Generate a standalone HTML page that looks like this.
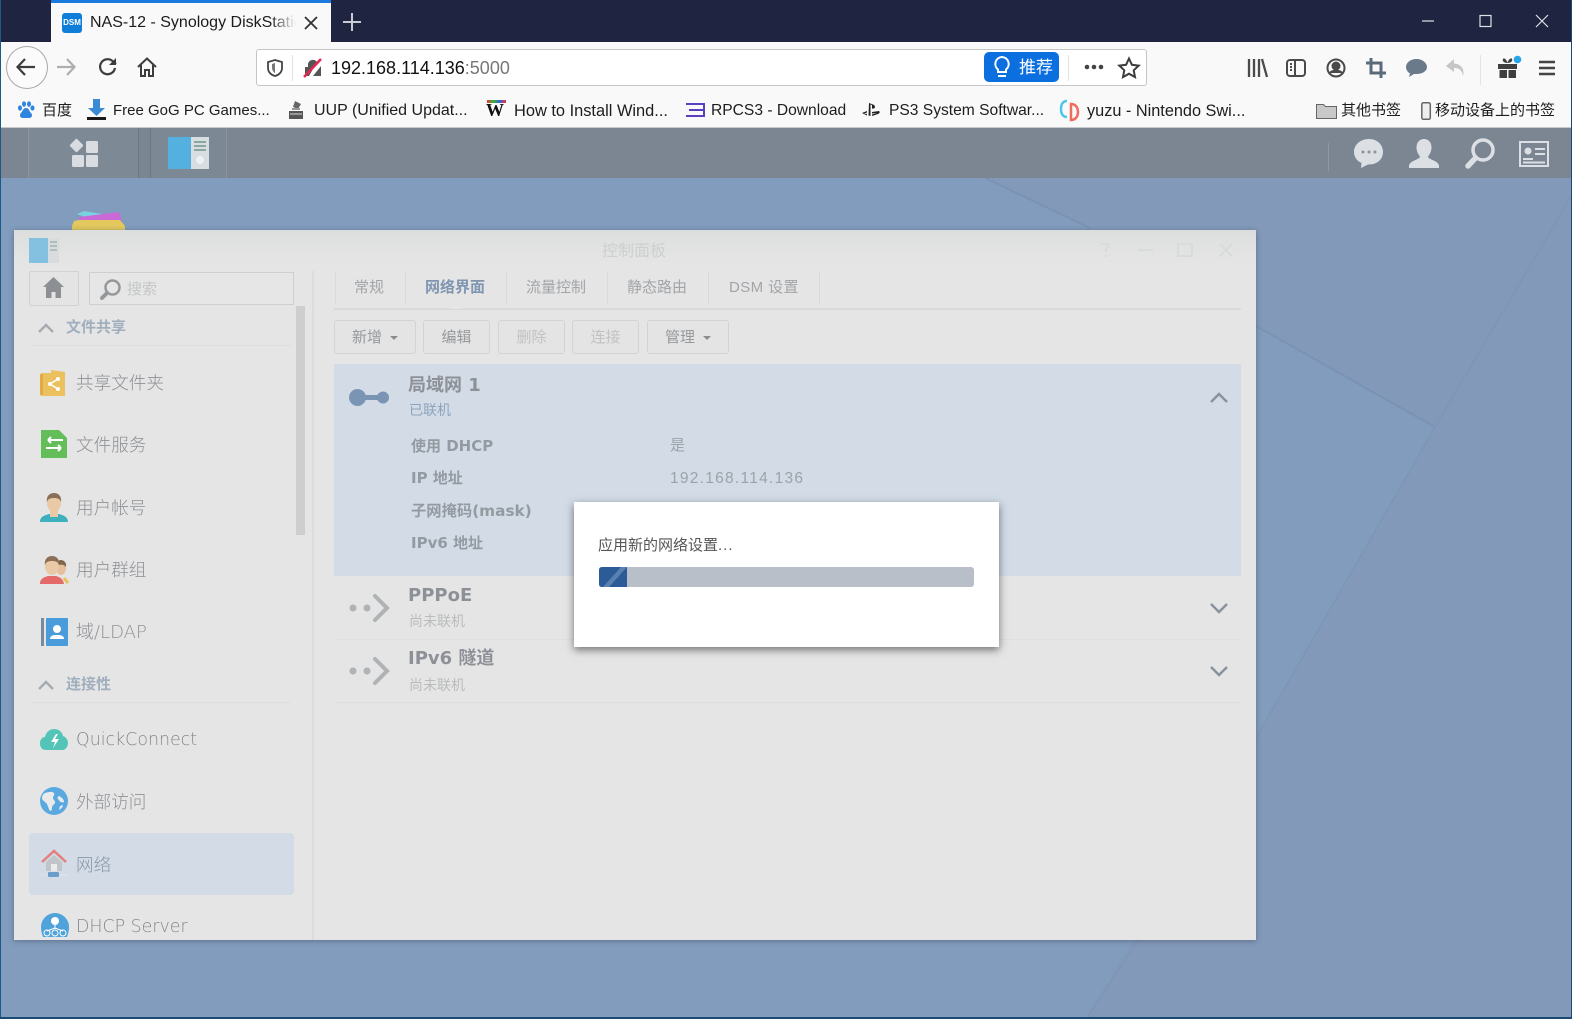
<!DOCTYPE html>
<html lang="zh"><head><meta charset="utf-8"><title>NAS-12 - Synology DiskStation</title>
<style>
*{box-sizing:border-box}
html,body{margin:0;padding:0;width:1572px;height:1019px;overflow:hidden;background:#8299b9}
body{position:relative;font-family:"Liberation Sans","Noto Sans CJK SC",sans-serif}
.a{position:absolute}
.t{position:absolute;white-space:nowrap;line-height:24px;height:24px}
svg{position:absolute;overflow:visible}
.bm{font-size:16px;color:#1d1d1d;top:99px}
.nav{font-size:17.6px;color:#8e9195;left:76px;font-weight:300}
.navl{font-family:"DejaVu Sans","Noto Sans CJK SC",sans-serif;font-size:17.4px}
.hd{font-size:15px;font-weight:700;color:#a0aebd;left:66px}
.tab{font-size:15px;color:#a2a5a8;top:276px}
.tabl{position:absolute;top:272px;height:32px;width:1px;background:#dadada}
.btn{position:absolute;top:320px;height:34px;background:#e4e4e4;border:1px solid #d3d3d3;border-radius:3px;font-size:15px;color:#96999c;text-align:center;line-height:34px}
.btn.d{color:#c0c2c4}
.car{display:inline-block;width:0;height:0;border:4px solid transparent;border-top-color:#8a8d90;border-bottom:0;margin-left:8px;vertical-align:2px}
.lab{font-family:"DejaVu Sans","Noto Sans CJK SC",sans-serif;font-weight:700;font-size:15px;color:#949aa2;left:411px}
.sm{font-size:14px;color:#b9bbbd;left:409px}
.ti{font-family:"DejaVu Sans","Noto Sans CJK SC",sans-serif;font-weight:700;font-size:18px;color:#8d9197;left:408px}
</style></head><body>

<!-- desktop background -->
<svg width="1572" height="1019" style="left:0;top:0">
<rect width="1572" height="1019" fill="#8299b9"/>
<polygon points="0,178 985,178 1090,228 1256,326 1435,427 1256,738 1130,945 1085,1019 0,1019" fill="#819cbd"/>
<polygon points="1435,427 1256,326 1090,228 988,178 1572,178 1572,195" fill="#8299b9"/>
<path d="M985 178L1090 228M1256 326L1435 427" stroke="#7a93b5" stroke-width="2" fill="none"/>
<path d="M1572 195L1435 427L1256 738M1138 940L1086 1019" stroke="#7c96b8" stroke-width="1.5" fill="none"/>
</svg>

<!-- desktop icon peek -->
<svg width="60" height="24" style="left:70px;top:208px">
<path d="M7 6L14 3L38 7L26 13Z" fill="#79d2dd"/><path d="M9 9L49 4L52 14L10 16Z" fill="#c968d6"/>
<path d="M4 13L9 12H50L55 18V24H2V18Z" fill="#e2c85d"/>
</svg>

<!-- DSM bar -->
<div class="a" style="left:0;top:127px;width:1572px;height:51px;background:#7b8692"></div>
<div class="a" style="left:28px;top:128px;width:111px;height:50px;border-left:1px solid #8a949e;border-right:1px solid #6d7782;background:#7d8994"></div>
<div class="a" style="left:150px;top:128px;width:77px;height:50px;border-left:1px solid #6d7782;border-right:1px solid #8a949e;background:#7c8893"></div>
<div class="a" style="left:1328px;top:143px;width:1px;height:28px;background:#8e98a2"></div>
<svg width="30" height="32" style="left:69px;top:138px" fill="#d9dde2">
<rect x="2.5" y="2.5" width="10" height="10" rx="1" transform="rotate(45 7.5 7.5)"/><rect x="17" y="3" width="12" height="12" rx="1.5"/><rect x="3" y="17" width="12" height="12" rx="1.5"/><rect x="17" y="17" width="12" height="12" rx="1.5"/></svg>
<svg width="42" height="33" style="left:168px;top:137px"><rect width="23" height="32" fill="#54b0df"/><rect x="23" width="18" height="32" fill="#d7dde1"/><path d="M26 5h12M26 9h12M26 13h12" stroke="#8aa7a0" stroke-width="2"/><circle cx="32" cy="23" r="4" fill="#eef1f3"/></svg>
<!-- right dsm icons -->
<svg width="30" height="30" style="left:1354px;top:139px" fill="#dce0e5"><path d="M15 0C6.500 0 0 5.500 0 13c0 5 3 9 7.500 11L7 29l7-3.500h1c8.500 0 14-5.500 14-12.500S23.500 0 15 0Z"/><circle cx="9" cy="13" r="1.500" fill="#8a949e"/><circle cx="15" cy="13" r="1.500" fill="#8a949e"/><circle cx="21" cy="13" r="1.500" fill="#8a949e"/></svg>
<svg width="30" height="30" style="left:1409px;top:139px" fill="#dce0e5"><path d="M15 0c5 0 7.500 4 7.500 8.500 0 4-2 7-3.500 9 0 3 10 4 11 9v2.500H0v-2.500c1-5 11-6 11-9-1.500-2-3.500-5-3.500-9C7.500 4 10 0 15 0Z"/></svg>
<svg width="30" height="30" style="left:1465px;top:139px" fill="none"><circle cx="18" cy="11" r="10" stroke="#dce0e5" stroke-width="3.500"/><path d="M10.500 19L3 27" stroke="#dce0e5" stroke-width="5.500" stroke-linecap="round"/></svg>
<svg width="31" height="26" style="left:1519px;top:141px" fill="none"><rect x="1" y="1" width="28" height="24" stroke="#dce0e5" stroke-width="2"/><circle cx="9" cy="10" r="3.500" fill="#dce0e5"/><path d="M4 18h10M16 8h10M16 13h10M4 21.500h22" stroke="#dce0e5" stroke-width="2"/></svg>

<!-- Window -->
<div class="a" style="left:14px;top:230px;width:1242px;height:710px;background:#e5e5e5;box-shadow:0 1px 5px rgba(50,60,80,.45)"></div>
<div class="a" style="left:14px;top:230px;width:1242px;height:34px;background:linear-gradient(#dcdedd,#e5e5e5)"></div>
<svg width="30" height="26" style="left:29px;top:238px"><rect width="19" height="25" fill="#84c0e0"/><rect x="19" width="11" height="25" fill="#d8dcdf"/><path d="M21 4h7M21 8h7M21 12h7" stroke="#9fb3ad" stroke-width="1.500"/></svg>
<div class="t" style="left:602px;top:240px;font-size:16px;color:#cdcfd0">控制面板</div>
<svg width="140" height="18" style="left:1098px;top:241px" fill="none" stroke="#d9dadb" stroke-width="2"><path d="M3 3h8l-3 6v2M8 14v2"/><path d="M40 9h15"/><rect x="80" y="3" width="14" height="12"/><path d="M122 3l12 12M134 3l-12 12"/></svg>

<!-- sidebar -->
<div class="a" style="left:29px;top:271px;width:50px;height:35px;background:#e4e4e4;border:1px solid #d2d2d2;border-radius:2px"></div>
<svg width="22" height="22" style="left:43px;top:277px" fill="#8c9094"><path d="M10.500 0L0 10h3v11h5.500v-6h4v6H18V10h3Z"/></svg>
<div class="a" style="left:89px;top:272px;width:205px;height:33px;background:#e6e6e6;border:1px solid #cfcfcf"></div>
<svg width="22" height="22" style="left:100px;top:279px" fill="none"><circle cx="12.500" cy="8.500" r="7" stroke="#95989b" stroke-width="2.500"/><path d="M7 14l-5 5" stroke="#95989b" stroke-width="4" stroke-linecap="round"/></svg>
<div class="t" style="left:127px;top:278px;font-size:15px;color:#c4c6c8">搜索</div>
<div class="a" style="left:296px;top:306px;width:9px;height:229px;background:#cecece"></div>
<div class="a" style="left:312px;top:271px;width:2px;height:669px;background:#dcdcdc"></div>

<svg width="16" height="10" style="left:38px;top:323px" fill="none" stroke="#a6acb2" stroke-width="2.500"><path d="M1 9l7-7 7 7"/></svg>
<div class="t hd" style="top:316px">文件共享</div>
<div class="a" style="left:30px;top:345px;width:262px;height:1px;background:#dedede"></div>

<svg width="28" height="28" style="left:40px;top:368px"><path d="M1 5h10V2l14 2v24H1Z" fill="#ebc160"/><path d="M0 6h3v21H0Z" fill="#e0ac45"/><circle cx="10" cy="16" r="2" fill="#fff"/><circle cx="18" cy="11" r="2" fill="#fff"/><circle cx="18" cy="21" r="2" fill="#fff"/><path d="M10 16l8-5M10 16l8 5" stroke="#fff" stroke-width="1.500"/></svg>
<div class="t nav" style="top:371px">共享文件夹</div>
<svg width="26" height="28" style="left:41px;top:430px"><path d="M0 0h18l8 8v20H0Z" fill="#63bd59"/><path d="M7 10H22M7 10l3-3M7 10l3 3M20 18H5M20 18l-3-3M20 18l-3 3" stroke="#fff" stroke-width="2" fill="none"/></svg>
<div class="t nav" style="top:433px">文件服务</div>
<svg width="28" height="29" style="left:40px;top:493px"><path d="M0 29c0-6 6-7 9-8h10c3 1 9 2 9 8Z" fill="#3eb0bd"/><rect x="10" y="16" width="8" height="8" fill="#eac9a6"/><ellipse cx="14" cy="10" rx="7" ry="9" fill="#eac9a6"/><path d="M7 9C6 2 11 0 14 0s8 2 7 9c-1-3-3-4-7-4s-6 1-7 4Z" fill="#8b6e58"/></svg>
<div class="t nav" style="top:496px">用户帐号</div>
<svg width="29" height="29" style="left:40px;top:555px"><ellipse cx="21" cy="13" rx="5" ry="7" fill="#e5c09d"/><path d="M16 11c0-5 3-6 5-6s6 2 5 7c-2-3-6-3-10-1Z" fill="#80654f"/><path d="M0 29c0-6 5-7 8-8h8c3 1 7 2 8 8Z" fill="#e36a68"/><ellipse cx="12" cy="11" rx="7" ry="9" fill="#eac9a6"/><path d="M5 10C4 3 9 1 12 1s8 2 7 9c-1-3-3-4-7-4s-6 1-7 4Z" fill="#8b6e58"/><path d="M24 23l4 5" stroke="#e8c25c" stroke-width="3"/></svg>
<div class="t nav" style="top:558px">用户群组</div>
<svg width="27" height="28" style="left:41px;top:618px"><rect width="3" height="28" fill="#7a8a9d"/><rect x="5" width="22" height="28" rx="1" fill="#4a9bd9"/><circle cx="16" cy="11" r="4" fill="#fff"/><path d="M9 21c0-4 4-4 7-4s7 0 7 4Z" fill="#fff"/></svg>
<div class="t nav navl" style="top:621px;font-size:18px">域/LDAP</div>

<svg width="16" height="10" style="left:38px;top:680px" fill="none" stroke="#a6acb2" stroke-width="2.500"><path d="M1 9l7-7 7 7"/></svg>
<div class="t hd" style="top:673px">连接性</div>
<div class="a" style="left:32px;top:702px;width:258px;height:1px;background:#dcdcdc"></div>

<svg width="28" height="24" style="left:40px;top:727px"><path d="M6 23C1 23 0 19 0 16c0-3 2-6 5-6 1-5 5-8 9-8 5 0 8 3 9 7 3 1 5 4 5 7s-2 7-6 7Z" fill="#54c4b8"/><path d="M16 7l-5 8h4l-2 6 6-9h-4l3-5Z" fill="#fff"/></svg>
<div class="t nav navl" style="top:728px;color:#85888c">QuickConnect</div>
<svg width="28" height="28" style="left:40px;top:787px"><circle cx="14" cy="14" r="14" fill="#5aa9e0"/><path d="M5 6c3-1 7-2 9 0 1 2-1 3-1 5s3 3 2 5-3 2-3 5c0 2-1 3-2 3-2-3-2-6-4-8s-4-3-4-5 1-4 3-5ZM19 9c2 1 5 3 5 6-1 1-2 0-3 0s-2-2-3-3 0-3 1-3ZM20 19l3-1c0 2-2 4-4 5Z" fill="#e8eaec"/></svg>
<div class="t nav" style="top:790px">外部访问</div>

<div class="a" style="left:29px;top:833px;width:265px;height:62px;background:#d2dbe6;border-radius:4px"></div>
<svg width="28" height="28" style="left:40px;top:850px"><path d="M2 12L14 1l12 11" fill="none" stroke="#e47f80" stroke-width="2.500"/><path d="M6 12L14 5l8 7v9H6Z" fill="#bfc5c9"/><rect x="11" y="14" width="6" height="7" fill="#e9ebec"/><path d="M0 25h28" stroke="#e0e3e6" stroke-width="1"/><rect x="8" y="22" width="11" height="5" rx="1" fill="#6b9ccb"/></svg>
<div class="t nav" style="top:853px;color:#8a97a7">网络</div>

<svg width="28" height="24" style="left:41px;top:913px"><path d="M14 0a14 14 0 0 1 14 14c0 4-1 7-2 10H2C1 21 0 18 0 14A14 14 0 0 1 14 0Z" fill="#4fa3da"/><circle cx="14" cy="8" r="4" fill="#fff"/><path d="M14 11v5M6 18l8-3 8 3" stroke="#fff" fill="none"/><circle cx="6" cy="20" r="3" fill="none" stroke="#fff"/><circle cx="14" cy="20" r="3" fill="none" stroke="#fff"/><circle cx="22" cy="20" r="3" fill="none" stroke="#fff"/></svg>
<div class="a" style="left:14px;top:900px;width:298px;height:40px;overflow:hidden">
<div class="t nav navl" style="top:15px;left:62px;color:#85888c">DHCP Server</div></div>

<!-- tabs -->
<div class="tabl" style="left:335px"></div><div class="tabl" style="left:405px"></div><div class="tabl" style="left:506px"></div><div class="tabl" style="left:607px"></div><div class="tabl" style="left:708px"></div><div class="tabl" style="left:819px"></div>
<div class="t tab" style="left:354px">常规</div>
<div class="t tab" style="left:425px;color:#7f95b0;font-weight:700">网络界面</div>
<div class="t tab" style="left:526px">流量控制</div>
<div class="t tab" style="left:627px">静态路由</div>
<div class="t tab" style="left:729px;letter-spacing:.4px">DSM 设置</div>
<div class="a" style="left:334px;top:308px;width:907px;height:2px;background:#d9d9d9"></div>
<svg width="14" height="8" style="left:449px;top:302px"><path d="M0 7L7 0l7 7Z" fill="#e5e5e5"/></svg>

<div class="btn" style="left:334px;width:82px">新增<span class="car"></span></div>
<div class="btn" style="left:423px;width:67px">编辑</div>
<div class="btn d" style="left:498px;width:67px">删除</div>
<div class="btn d" style="left:572px;width:67px">连接</div>
<div class="btn" style="left:647px;width:82px">管理<span class="car"></span></div>

<!-- LAN panel -->
<div class="a" style="left:334px;top:364px;width:907px;height:212px;background:#d2dbe6"></div>
<svg width="42" height="18" style="left:349px;top:389px"><circle cx="8.500" cy="8.500" r="8.500" fill="#7a94b4"/><circle cx="34" cy="8.500" r="6" fill="#7a94b4"/><path d="M9 8.500h25" stroke="#7a94b4" stroke-width="5"/></svg>
<div class="t ti" style="top:374px">局域网 1</div>
<div class="t" style="left:409px;top:398px;font-size:14px;color:#8da4bf">已联机</div>
<div class="t lab" style="top:434px">使用 DHCP</div>
<div class="t lab" style="top:466px">IP 地址</div>
<div class="t lab" style="top:499px;font-size:15.3px">子网掩码(mask)</div>
<div class="t lab" style="top:531px">IPv6 地址</div>
<div class="t" style="left:670px;top:434px;font-size:15px;color:#9ca2a9">是</div>
<div class="t" style="left:670px;top:467px;font-size:15.500px;color:#9ca2a9;letter-spacing:1.27px">192.168.114.136</div>
<svg width="18" height="11" style="left:1210px;top:392px" fill="none" stroke="#8a939c" stroke-width="2.500"><path d="M1 10l8-8 8 8"/></svg>

<!-- PPPoE -->
<svg width="42" height="32" style="left:349px;top:593px"><circle cx="4" cy="15" r="3.500" fill="#b0b3b6"/><circle cx="18" cy="15" r="3.500" fill="#b0b3b6"/><path d="M26 3l12 12-12 12" fill="none" stroke="#b0b3b6" stroke-width="4" stroke-linecap="round"/></svg>
<div class="t ti" style="top:584px">PPPoE</div>
<div class="t sm" style="top:609px">尚未联机</div>
<div class="a" style="left:336px;top:639px;width:905px;height:1px;background:#dfdfdf"></div>
<svg width="18" height="11" style="left:1210px;top:603px" fill="none" stroke="#8a939c" stroke-width="2.500"><path d="M1 1l8 8 8-8"/></svg>
<!-- IPv6 -->
<svg width="42" height="32" style="left:349px;top:656px"><circle cx="4" cy="15" r="3.500" fill="#b0b3b6"/><circle cx="18" cy="15" r="3.500" fill="#b0b3b6"/><path d="M26 3l12 12-12 12" fill="none" stroke="#b0b3b6" stroke-width="4" stroke-linecap="round"/></svg>
<div class="t ti" style="top:647px">IPv6 隧道</div>
<div class="t sm" style="top:673px">尚未联机</div>
<div class="a" style="left:336px;top:702px;width:905px;height:1px;background:#dcdcdc"></div>
<svg width="18" height="11" style="left:1210px;top:666px" fill="none" stroke="#8a939c" stroke-width="2.500"><path d="M1 1l8 8 8-8"/></svg>

<!-- dialog -->
<div class="a" style="left:574px;top:502px;width:425px;height:145px;background:#fff;box-shadow:0 3px 8px rgba(0,0,0,.5)"></div>
<div class="t" style="left:598px;top:534px;font-size:15px;color:#555">应用新的网络设置<span style="letter-spacing:1px">...</span></div>
<div class="a" style="left:599px;top:567px;width:375px;height:20px;background:#b8bfc8;border-radius:3px"></div>
<svg width="28" height="20" style="left:599px;top:567px"><path d="M3 0h25v20H3q-3 0-3-3V3q0-3 3-3Z" fill="#2b5c98"/><path d="M4 20L22 0h6L10 20Z" fill="#5a80ad"/></svg>

<!-- Browser chrome -->
<div class="a" style="left:0;top:0;width:1572px;height:42px;background:#1f2440"></div>
<div class="a" style="left:51px;top:0;width:280px;height:42px;background:#f9f9fa"></div>
<div class="a" style="left:51px;top:0;width:280px;height:3px;background:#1a7ade"></div>
<div class="a" style="left:0;top:42px;width:1572px;height:86px;background:#f9f9fa"></div>
<div class="a" style="left:0;top:127px;width:1572px;height:1px;background:#c7cacd"></div>
<div class="a" style="left:0;top:0;width:1px;height:1019px;background:#1b5a85"></div>
<div class="a" style="left:1571px;top:0;width:1px;height:1019px;background:#1b4a75"></div>
<div class="a" style="left:0;top:1017px;width:1572px;height:2px;background:#1b4a75"></div>

<!-- tab -->
<div class="a" style="left:62px;top:13px;width:20px;height:20px;background:#0f7ed8;border-radius:3px;color:#fff;font:700 8px/20px 'Liberation Sans',sans-serif;text-align:center">DSM</div>
<div class="a" style="left:90px;top:11px;width:206px;height:24px;overflow:hidden">
<div class="t" style="left:0;top:0;font-size:16px;color:#1c1c1c">NAS-12 - Synology DiskStation</div>
<div class="a" style="right:0;top:0;width:26px;height:24px;background:linear-gradient(90deg,rgba(249,249,250,0),#f9f9fa)"></div></div>
<svg width="14" height="14" style="left:304px;top:16px" stroke="#333" stroke-width="1.800"><path d="M1 1l12 12M13 1L1 13"/></svg>
<svg width="18" height="18" style="left:343px;top:13px" stroke="#c9ccd4" stroke-width="2"><path d="M9 0v18M0 9h18"/></svg>
<!-- window controls -->
<svg width="130" height="14" style="left:1422px;top:14px" fill="none" stroke="#dfe1e7" stroke-width="1.200"><path d="M0 7h12"/><rect x="58" y="1.500" width="11" height="11"/><path d="M114 1l12 12M126 1l-12 12"/></svg>

<!-- nav -->
<div class="a" style="left:6px;top:46px;width:42px;height:43px;border-radius:50%;background:#fbfbfb;border:1px solid #a8a8a8"></div>
<svg width="20" height="18" style="left:16px;top:58px" fill="none" stroke="#3d3d3d" stroke-width="2.200"><path d="M19 9H2M9 1L1.500 9 9 17"/></svg>
<svg width="20" height="18" style="left:57px;top:58px" fill="none" stroke="#aeaeae" stroke-width="2.200"><path d="M0 9h17M10 1l7.500 8-7.500 8"/></svg>
<svg width="20" height="20" style="left:98px;top:57px" fill="none" stroke="#3d3d3d" stroke-width="2.200"><path d="M17 11a7.500 7.500 0 1 1-2-6.500L18 7"/><path d="M18 1v7h-7" fill="#3d3d3d" stroke="none"/></svg>
<svg width="20" height="20" style="left:137px;top:57px" fill="none" stroke="#3d3d3d" stroke-width="2"><path d="M1 10L10 1.500 19 10"/><path d="M4 8v11h4v-6h4v6h4V8"/></svg>

<!-- URL bar -->
<div class="a" style="left:256px;top:49px;width:891px;height:37px;background:#fff;border:1px solid #c5c5c7;border-radius:3px"></div>
<svg width="16" height="18" style="left:267px;top:59px" fill="none"><path d="M8 1l7 2v6c0 4-3 7-7 8-4-1-7-4-7-8V3Z" stroke="#444" stroke-width="1.800"/><path d="M8 4v10c-2-1-3-3-3-6V5Z" fill="#777"/></svg>
<div class="a" style="left:292px;top:55px;width:1px;height:26px;background:#e2e2e2"></div>
<svg width="20" height="20" style="left:303px;top:58px"><path d="M2 18V9h3V6a5 5 0 0 1 9-2L6 18Z M10 18l8-10v10Z" fill="#555"/><path d="M1 19L18 1" stroke="#e22850" stroke-width="2.500"/></svg>
<div class="t" style="left:331px;top:56px;font-size:18px;color:#111">192.168.114.136<span style="color:#777">:5000</span></div>
<div class="a" style="left:984px;top:52px;width:75px;height:30px;background:#0b6fe0;border-radius:5px"></div>
<svg width="16" height="22" style="left:994px;top:56px" fill="none" stroke="#fff" stroke-width="2"><path d="M8 1a7 7 0 0 1 4 12.500V16H4v-2.500A7 7 0 0 1 8 1Z"/><path d="M4 20h8"/></svg>
<div class="t" style="left:1019px;top:56px;font-size:17px;color:#fff">推荐</div>
<div class="a" style="left:1068px;top:55px;width:1px;height:26px;background:#e2e2e2"></div>
<svg width="20" height="6" style="left:1084px;top:64px" fill="#444"><circle cx="3" cy="3" r="2.300"/><circle cx="10" cy="3" r="2.300"/><circle cx="17" cy="3" r="2.300"/></svg>
<svg width="22" height="22" style="left:1118px;top:57px" fill="none" stroke="#3d3d3d" stroke-width="2"><path d="M11 1.500l2.900 6.300 6.800.8-5 4.700 1.300 6.800-6-3.400-6 3.400 1.300-6.800-5-4.700 6.800-.8Z"/></svg>

<!-- toolbar right -->
<svg width="20" height="20" style="left:1247px;top:58px" fill="none" stroke="#4a4a4a" stroke-width="2.300"><path d="M2 1v18M7 1v18M12 1v18M15 1l5 18"/></svg>
<svg width="20" height="18" style="left:1286px;top:59px" fill="none" stroke="#4a4a4a" stroke-width="2"><rect x="1" y="1" width="18" height="16" rx="3"/><path d="M9 1v16M4 5h2M4 8h2M4 11h2"/></svg>
<svg width="20" height="20" style="left:1326px;top:58px" fill="none" stroke="#4a4a4a" stroke-width="2"><circle cx="10" cy="10" r="8.500"/><circle cx="10" cy="8" r="3.500" fill="#4a4a4a"/><path d="M4 15c2-3 10-3 12 0" fill="#4a4a4a"/></svg>
<svg width="20" height="20" style="left:1366px;top:58px" fill="none" stroke="#5a6a7a" stroke-width="3"><path d="M5 0v15h15M0 5h15v15"/></svg>
<svg width="21" height="18" style="left:1406px;top:59px" fill="#6b7a8a"><path d="M10.500 0C4.500 0 0 3.500 0 8c0 2.500 1.500 5 4 6.500L3 18l5-3h2.500C16.500 15 21 12 21 8s-4.500-8-10.500-8Z"/></svg>
<svg width="20" height="18" style="left:1446px;top:59px" fill="#c4c6c8"><path d="M8 0L0 7l8 6V9c5 0 8 2 9 8 2-7-2-12-9-12.500Z"/></svg>
<div class="a" style="left:1480px;top:55px;width:1px;height:30px;background:#e4e4e6"></div>
<svg width="26" height="24" style="left:1498px;top:55px"><rect x="0" y="9" width="19" height="5" fill="#3f3f3f"/><rect x="1.500" y="15" width="7.500" height="8" fill="#3f3f3f"/><rect x="10.500" y="15" width="7.500" height="8" fill="#3f3f3f"/><path d="M9.500 8C6 8 4 6 5 4s4 1 4.500 4c.5-3 3.500-6 4.500-4s-1 4-4.500 4Z" fill="#3f3f3f"/><circle cx="19.500" cy="4.500" r="3.800" fill="#26a6e8"/></svg>
<svg width="18" height="16" style="left:1538px;top:60px" stroke="#444" stroke-width="2.400"><path d="M1 2h16M1 8h16M1 14h16"/></svg>

<!-- bookmarks -->
<svg width="18" height="18" style="left:17px;top:101px" fill="#2f84e0"><ellipse cx="3" cy="7" rx="2" ry="2.600"/><ellipse cx="7" cy="3" rx="2" ry="2.800"/><ellipse cx="12" cy="3" rx="2" ry="2.800"/><ellipse cx="15.500" cy="7" rx="2" ry="2.600"/><path d="M9 7c-3 0-3 3-5 5s-1 5 2 5h6c3 0 4-3 2-5s-2-5-5-5Z"/></svg>
<div class="t bm" style="left:42px;font-size:15px">百度</div>
<svg width="19" height="21" style="left:87px;top:99px"><path d="M6 0h7v9h5l-8.500 8L1 9h5Z" fill="#3b8ad6"/><rect x="0" y="18" width="19" height="3" fill="#1a1a1a"/></svg>
<div class="t bm" style="left:113px;font-size:15px">Free GoG PC Games...</div>
<svg width="16" height="20" style="left:288px;top:100px"><rect x="1" y="11" width="14" height="8" fill="#555"/><path d="M7 1l6 3-3 5-5-2Z" fill="#666"/><path d="M2 14h12" stroke="#ddd"/><path d="M4 9h8" stroke="#999" stroke-width="2"/></svg>
<div class="t bm" style="left:314px">UUP (Unified Updat...</div>
<div class="a" style="left:487px;top:100px;width:19px;height:3px;background:linear-gradient(90deg,#e33,#3b3,#36d,#e33)"></div>
<div class="t" style="left:486px;top:100px;font:900 18px/20px 'Liberation Serif',serif;color:#111">W</div>
<div class="t bm" style="left:514px;font-size:16.4px">How to Install Wind...</div>
<svg width="20" height="16" style="left:686px;top:102px" fill="none" stroke="#5a3fc0" stroke-width="2"><path d="M0 2h18v6H3M18 8v6H0"/></svg>
<div class="t bm" style="left:711px;font-size:15.6px">RPCS3 - Download</div>
<svg width="18" height="14" style="left:862px;top:103px" fill="#222"><path d="M7 0l4 1.500c3 1 2.500 5-1 4V2L8.500 1.500V13L6.500 12.500ZM0 10l5-2v1.500L2 10.500l3 .5v1.500ZM10 9l7-1c1 1 1 2-1 3l-6 2v-1.500l5-1.500-5 .5Z"/></svg>
<div class="t bm" style="left:889px;font-size:15.6px">PS3 System Softwar...</div>
<svg width="20" height="22" style="left:1060px;top:100px" fill="none" stroke-width="2.500"><path d="M7 1C3 1 1 4 1 9s2 8 6 8" stroke="#4cc6ea"/><path d="M11 4c4 0 7 3 7 8s-3 8-7 8Z" stroke="#ef6a5f"/></svg>
<div class="t bm" style="left:1087px;font-size:16.3px">yuzu - Nintendo Swi...</div>
<svg width="21" height="17" style="left:1316px;top:102px" fill="#c8c8c8" stroke="#666"><path d="M.5 2.500h7l2 2h11v12H.5Z"/></svg>
<div class="t" style="left:1341px;top:99px;font-size:15px;color:#1d1d1d">其他书签</div>
<svg width="10" height="18" style="left:1421px;top:102px" fill="#eee" stroke="#666" stroke-width="1.500"><rect x=".8" y=".8" width="8.500" height="16.500" rx="1.500"/></svg>
<div class="t" style="left:1435px;top:99px;font-size:15px;color:#1d1d1d">移动设备上的书签</div>
</body></html>
